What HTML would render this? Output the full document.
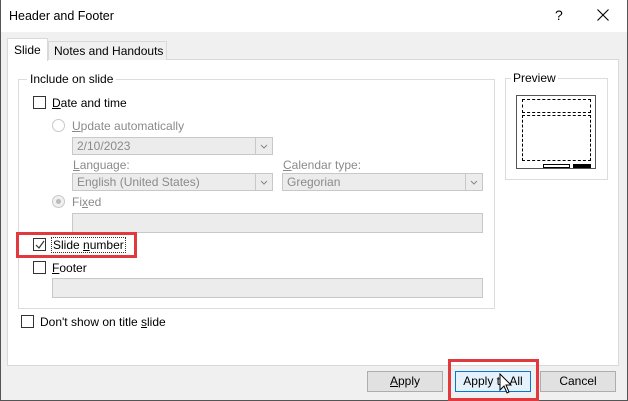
<!DOCTYPE html>
<html><head><style>
*{box-sizing:border-box;margin:0;padding:0}
body{width:628px;height:401px;overflow:hidden;background:#f0f0f0;font-family:"Liberation Sans",sans-serif;font-size:12px;color:#000;position:relative}
.a{position:absolute}
.t{position:absolute;white-space:nowrap;line-height:14px}
.g{color:#8a8a8a}
.cb{position:absolute;width:13px;height:13px;border:1px solid #333;background:#fff}
.rd{position:absolute;width:13px;height:13px;border:1px solid #c8c8c8;border-radius:50%;background:#fff}
.dd{position:absolute;height:18px;border:1px solid #c8c8c8;background:#ececec;color:#8a8a8a;padding:2px 4px;line-height:13px}
.dd .ar{position:absolute;right:0;top:0;width:17px;height:16px;border-left:1px solid #c8c8c8}
.btn{position:absolute;height:21px;border:1px solid #adadad;background:#e1e1e1;text-align:center;line-height:19px}
u{text-decoration:underline}
</style></head><body>
<div class="a" style="left:0;top:0;width:628px;height:32px;background:#fff"></div>
<div class="t" style="left:9px;top:9px;font-size:12.5px">Header and Footer</div>
<div class="t" style="left:555px;top:8px;font-size:14px">?</div>
<svg class="a" style="left:597px;top:9px" width="12" height="12" viewBox="0 0 12 12"><path d="M0.5 0.5 L11.5 11.5 M11.5 0.5 L0.5 11.5" stroke="#000" stroke-width="1.1"/></svg>
<div class="a" style="left:0;top:0;width:1px;height:401px;background:#555"></div>
<div class="a" style="left:627px;top:0;width:1px;height:401px;background:#555"></div>
<div class="a" style="left:0;top:400px;width:628px;height:1px;background:#555"></div>
<div class="a" style="left:7px;top:59px;width:612px;height:307px;background:#fff;border:1px solid #d9d9d9"></div>
<div class="a" style="left:48px;top:41px;width:119px;height:19px;background:#f0f0f0;border:1px solid #d9d9d9;border-bottom:none"></div>
<div class="t" style="left:54px;top:44px">Notes and Handouts</div>
<div class="a" style="left:7px;top:38px;width:41px;height:23px;background:#fff;border:1px solid #d9d9d9;border-bottom:none"></div>
<div class="t" style="left:14px;top:43px">Slide</div>
<div class="a" style="left:18px;top:79px;width:477px;height:230px;border:1px solid #dcdcdc"></div>
<div class="t" style="left:27px;top:72px;background:#fff;padding:0 3px">Include on slide</div>
<div class="cb" style="left:33px;top:96px"></div>
<div class="t" style="left:52px;top:96px"><u>D</u>ate and time</div>
<div class="rd" style="left:52px;top:119px"></div>
<div class="t g" style="left:72px;top:119px"><u>U</u>pdate automatically</div>
<div class="dd" style="left:72px;top:137px;width:201px">2/10/2023<div class="ar"><svg width="16" height="16"><path d="M5 7 L8 10 L11 7" fill="none" stroke="#888"/></svg></div></div>
<div class="t g" style="left:73px;top:158px"><u>L</u>anguage:</div>
<div class="t g" style="left:283px;top:158px"><u>C</u>alendar type:</div>
<div class="dd" style="left:72px;top:173px;width:201px">English (United States)<div class="ar"><svg width="16" height="16"><path d="M5 7 L8 10 L11 7" fill="none" stroke="#888"/></svg></div></div>
<div class="dd" style="left:282px;top:173px;width:201px">Gregorian<div class="ar"><svg width="16" height="16"><path d="M5 7 L8 10 L11 7" fill="none" stroke="#888"/></svg></div></div>
<div class="rd" style="left:52px;top:195px;background:#f0f0f0"><div class="a" style="left:3px;top:3px;width:5px;height:5px;border-radius:50%;background:#bbb"></div></div>
<div class="t g" style="left:72px;top:195px">Fi<u>x</u>ed</div>
<div class="a" style="left:72px;top:213px;width:411px;height:20px;border:1px solid #c8c8c8;background:#ececec"></div>
<div class="cb" style="left:33px;top:238px"><svg class="a" style="left:1px;top:1px" width="10" height="10"><path d="M1 5 L4 8 L9 1" fill="none" stroke="#333" stroke-width="1.2"/></svg></div>
<div class="t" style="left:52px;top:238px;outline:1px dotted #333;padding:0 1px"><span>Slide <u>n</u>umber</span></div>
<div class="a" style="left:16px;top:232px;width:121px;height:26px;border:3px solid #e0393e"></div>
<div class="cb" style="left:33px;top:261px"></div>
<div class="t" style="left:52px;top:261px"><u>F</u>ooter</div>
<div class="a" style="left:52px;top:278px;width:431px;height:20px;border:1px solid #c8c8c8;background:#ececec"></div>
<div class="cb" style="left:21px;top:315px"></div>
<div class="t" style="left:40px;top:315px">Don't show on title <u>s</u>lide</div>
<div class="a" style="left:505px;top:78px;width:103px;height:102px;border:1px solid #dcdcdc"></div>
<div class="t" style="left:511px;top:71px;background:#fff;padding:0 2px">Preview</div>
<div class="a" style="left:516px;top:95px;width:80px;height:74px;border:1px solid #555;background:#fff"></div>
<div class="a" style="left:522px;top:99px;width:69px;height:14px;border:1px dashed #000"></div>
<div class="a" style="left:522px;top:115px;width:69px;height:46px;border:1px dashed #000"></div>
<div class="a" style="left:543px;top:164px;width:27px;height:4px;border:1px solid #000"></div>
<div class="a" style="left:573px;top:164px;width:18px;height:4px;background:#000"></div>
<div class="btn" style="left:367px;top:371px;width:76px"><u>A</u>pply</div>
<div class="btn" style="left:455px;top:371px;width:76px;border-color:#0078d7;background:#e5f1fb">Apply t<u>o</u> All</div>
<div class="btn" style="left:540px;top:371px;width:76px">Cancel</div>
<div class="a" style="left:448px;top:359px;width:91px;height:42px;border:3px solid #e0393e"></div>
<svg class="a" style="left:499px;top:373px" width="14" height="22" viewBox="0 0 14 22"><path d="M1 1 L1 17 L5 13 L8 20 L10 19 L7 12 L12 12 Z" fill="#fff" stroke="#000" stroke-width="1"/></svg>
</body></html>
